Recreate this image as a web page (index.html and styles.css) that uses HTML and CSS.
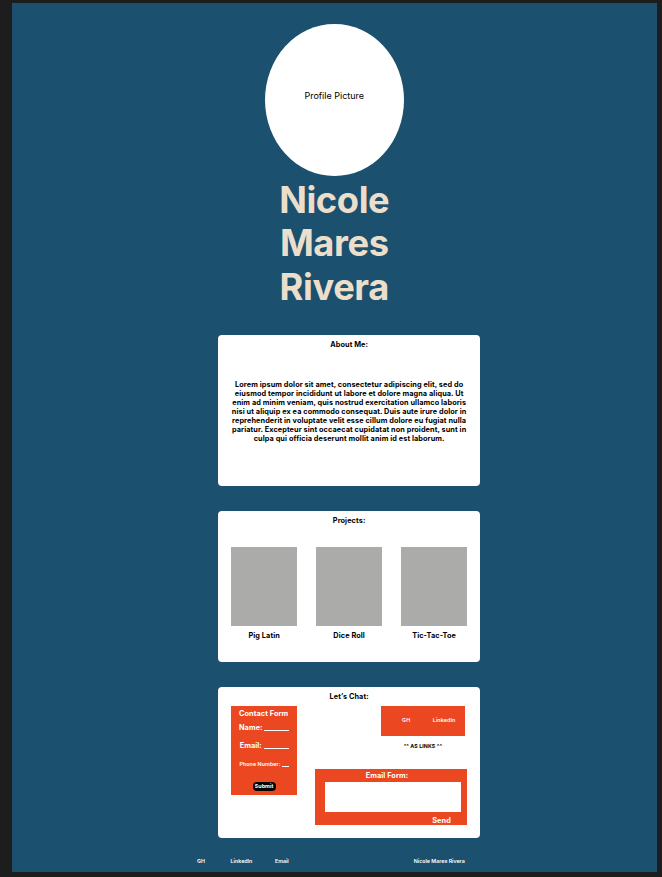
FILE: index.html
```html
<!DOCTYPE html>
<html lang="en">
<head>
<meta charset="utf-8">
<title>Nicole Mares Rivera</title>
<link rel="stylesheet" href="styles.css">
</head>
<body>
<div class="board">
  <header class="hero">
    <div class="avatar">Profile Picture</div>
    <h1 class="name">Nicole<br>Mares<br>Rivera</h1>
  </header>
  <main class="sections">
    <section class="card">
      <h2 class="card-title">About Me:</h2>
      <p class="about">Lorem ipsum dolor sit amet, consectetur adipiscing elit, sed do<br>eiusmod tempor incididunt ut labore et dolore magna aliqua. Ut<br>enim ad minim veniam, quis nostrud exercitation ullamco laboris<br>nisi ut aliquip ex ea commodo consequat. Duis aute irure dolor in<br>reprehenderit in voluptate velit esse cillum dolore eu fugiat nulla<br>pariatur. Excepteur sint occaecat cupidatat non proident, sunt in<br>culpa qui officia deserunt mollit anim id est laborum.</p>
    </section>
    <section class="card">
      <h2 class="card-title">Projects:</h2>
      <div class="projects">
        <figure class="project"><div class="thumb"></div><figcaption>Pig Latin</figcaption></figure>
        <figure class="project"><div class="thumb"></div><figcaption>Dice Roll</figcaption></figure>
        <figure class="project"><div class="thumb"></div><figcaption>Tic-Tac-Toe</figcaption></figure>
      </div>
    </section>
    <section class="card">
      <h2 class="card-title">Let’s Chat:</h2>
      <div class="chat">
        <div class="contact">
          <div class="contact-title">Contact Form</div>
          <div class="field">Name: <span class="blank"></span></div>
          <div class="field field-email">Email: <span class="blank"></span></div>
          <div class="field field-phone">Phone Number: <span class="blank blank-short"></span></div>
          <div class="submit">Submit</div>
        </div>
        <div class="chat-side">
          <div class="links"><span>GH</span><span>LinkedIn</span></div>
          <div class="links-note">^^ AS LINKS ^^</div>
          <div class="email-form">
            <div class="email-title">Email Form:</div>
            <div class="email-body"></div>
            <div class="send">Send</div>
          </div>
        </div>
      </div>
    </section>
  </main>
  <footer class="footer">
    <span class="foot-gh">GH</span><span class="foot-in">LinkedIn</span><span class="foot-mail">Email</span><span class="foot-name">Nicole Mares Rivera</span>
  </footer>
</div>
</body>
</html>
```
FILE: styles.css
```css
* { box-sizing: border-box; }
body {
  margin: 0;
  height: 877px;
  padding: 3px 5px 0 11.5px;
  background: #1d1d1d;
  overflow: hidden;
  font-family: Inter, "Liberation Sans", sans-serif;
  font-size: 7.3px;
  line-height: 9px;
  font-weight: 700;
  letter-spacing: 0.09px;
  color: #000;
}
.board {
  height: 869px;
  padding-top: 21px;
  background: #1b506e;
}
.hero {
  display: flex;
  flex-direction: column;
  align-items: center;
}
.avatar {
  width: 138.5px;
  height: 152px;
  padding-top: 66px;
  border-radius: 50%;
  background: #fff;
  text-align: center;
  font-size: 9px;
  line-height: 11px;
  font-weight: 400;
  letter-spacing: 0;
}
.name {
  width: 140px;
  margin: 2.5px 0 0;
  color: #ebdfcc;
  font-size: 36.3px;
  line-height: 43.5px;
  font-weight: 700;
  letter-spacing: -0.4px;
  text-align: center;
}
.sections {
  display: flex;
  flex-direction: column;
  gap: 24.7px;
  width: 261.5px;
  margin: 26px 0 0 206.9px;
}
.card {
  height: 151.2px;
  padding: 5px 13px 0;
  border-radius: 4px;
  background: #fff;
}
.card-title {
  margin: 0;
  font-size: inherit;
  text-align: center;
}
.about {
  margin: 31px -10px 0;
  text-align: center;
  white-space: nowrap;
}
.projects {
  display: flex;
  justify-content: space-between;
  margin-top: 22px;
}
.project {
  width: 65.6px;
  margin: 0;
  text-align: center;
}
.thumb {
  height: 79px;
  margin-bottom: 5px;
  background: #ababa9;
}
.chat {
  display: flex;
  justify-content: space-between;
  margin-top: 5px;
  color: #fff;
}
.contact {
  width: 65.6px;
  height: 89px;
  padding-top: 3px;
  background: #eb4721;
  text-align: center;
  white-space: nowrap;
}
.contact-title { margin-left: -1px; }
.field { margin-top: 5px; }
.field-email { margin-top: 9px; }
.field-phone {
  margin-top: 10px;
  font-size: 5.3px;
  font-weight: 600;
}
.blank {
  display: inline-block;
  width: 25px;
  height: 1px;
  background: #fff;
  vertical-align: -1.5px;
}
.blank-short {
  width: 7px;
  vertical-align: -1px;
}
.submit {
  width: 23px;
  margin: 13px auto 0;
  border-radius: 4px;
  background: #000;
  font-size: 5.3px;
}
.chat-side { width: 151.8px; }
.links {
  display: flex;
  gap: 22.5px;
  width: 83.5px;
  height: 30px;
  margin-left: 66px;
  padding: 10px 0 0 21px;
  background: #eb4721;
  font-size: 5.35px;
  font-weight: 600;
}
.links-note {
  width: 83.5px;
  margin: 6px 0 0 66px;
  color: #000;
  font-size: 5.3px;
  text-align: center;
}
.email-form {
  height: 56px;
  margin-top: 18.2px;
  padding: 2px 6px 0 10px;
  background: #eb4721;
}
.email-title {
  padding-right: 12px;
  text-align: center;
}
.email-body {
  height: 30.5px;
  margin-top: 2px;
  background: #fff;
}
.send {
  margin: 3.5px 10px 0 0;
  text-align: right;
}
.footer {
  display: flex;
  margin-top: 19.2px;
  padding-left: 185.5px;
  color: #fff;
  font-size: 5.3px;
  font-weight: 600;
  letter-spacing: 0;
}
.foot-in { margin-left: 25.7px; }
.foot-mail { margin-left: 22.7px; }
.foot-name { margin-left: 125px; }
```
